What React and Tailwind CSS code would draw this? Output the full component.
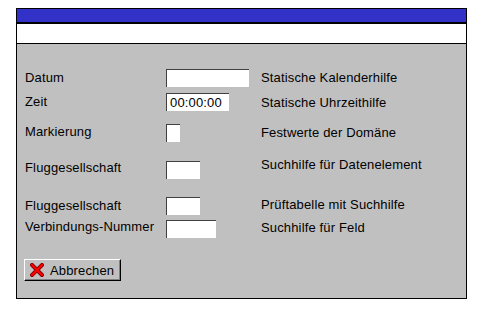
import React from 'react';

const font = { fontFamily: '"Liberation Sans", Arial, sans-serif' };

function Field({ width, value }) {
  return (
    <div
      className={`h-[18px] ${width} bg-white border-t border-l border-[#404040] pl-[3px] text-[13px] leading-[17px] text-black`}
    >
      {value}
    </div>
  );
}

function CancelIcon() {
  return (
    <svg width="14" height="14" viewBox="0 0 14 14">
      <path d="M2 2 L12 12 M12 2 L2 12" stroke="#800000" strokeWidth="4" strokeLinecap="square" />
      <path d="M2 2 L12 12 M12 2 L2 12" stroke="#ff0000" strokeWidth="2.2" strokeLinecap="square" />
    </svg>
  );
}

// each row: label / field / description, with small per-row offsets like the original dynpro
const rows = [
  { label: 'Datum', width: 'w-[83px]', value: '', desc: 'Statische Kalenderhilfe', mt: 'mt-0', l: 'mt-px', f: 'mt-0', d: 'mt-px' },
  { label: 'Zeit', width: 'w-[63px]', value: '00:00:00', desc: 'Statische Uhrzeithilfe', mt: 'mt-[6px]', l: 'mt-px', f: 'mt-0', d: 'mt-[2px]' },
  { label: 'Markierung', width: 'w-[14px]', value: '', desc: 'Festwerte der Domäne', mt: 'mt-[13px]', l: 'mt-0', f: 'mt-0', d: 'mt-px' },
  { label: 'Fluggesellschaft', width: 'w-[34px]', value: '', desc: 'Suchhilfe für Datenelement', mt: 'mt-[15px]', l: 'mt-[3px]', f: 'mt-[4px]', d: 'mt-0' },
  { label: 'Fluggesellschaft', width: 'w-[34px]', value: '', desc: 'Prüftabelle mit Suchhilfe', mt: 'mt-[18px]', l: 'mt-px', f: 'mt-0', d: 'mt-0' },
  { label: 'Verbindungs-Nummer', width: 'w-[50px]', value: '', desc: 'Suchhilfe für Feld', mt: 'mt-[4px]', l: 'mt-0', f: 'mt-px', d: 'mt-px' },
];

export default function App() {
  return (
    <div className="w-[478px] h-[310px] bg-white pt-[8px] pl-[16px]" style={font}>
      <div className="w-[451px] h-[291px] border border-black flex flex-col bg-[#c0c0c0]">
        <div className="h-[15px] bg-[#3232c8] border-b-2 border-black" />
        <div className="h-[20px] bg-white border-b border-black" />
        <div className="flex-1 pt-[25px] pl-[8px] text-[13px] leading-[15px] tracking-[0.15px] text-black">
          {rows.map((r, i) => (
            <div key={i} className={`flex items-start ${r.mt}`}>
              <div className={`w-[141px] whitespace-nowrap ${r.l}`}>{r.label}</div>
              <div className={`w-[95px] ${r.f}`}>
                <Field width={r.width} value={r.value} />
              </div>
              <div className={`whitespace-nowrap ${r.d}`}>{r.desc}</div>
            </div>
          ))}
          <button
            type="button"
            className="mt-[21px] -ml-px w-[97px] h-[22px] flex items-center gap-[6px] pl-[5px] bg-[#c0c0c0] border border-t-white border-l-white border-r-black border-b-black shadow-[inset_-1px_-1px_0_#808080] text-[13px] leading-[15px] tracking-[0.15px] text-black"
          >
            <CancelIcon />
            <span>Abbrechen</span>
          </button>
        </div>
      </div>
    </div>
  );
}
